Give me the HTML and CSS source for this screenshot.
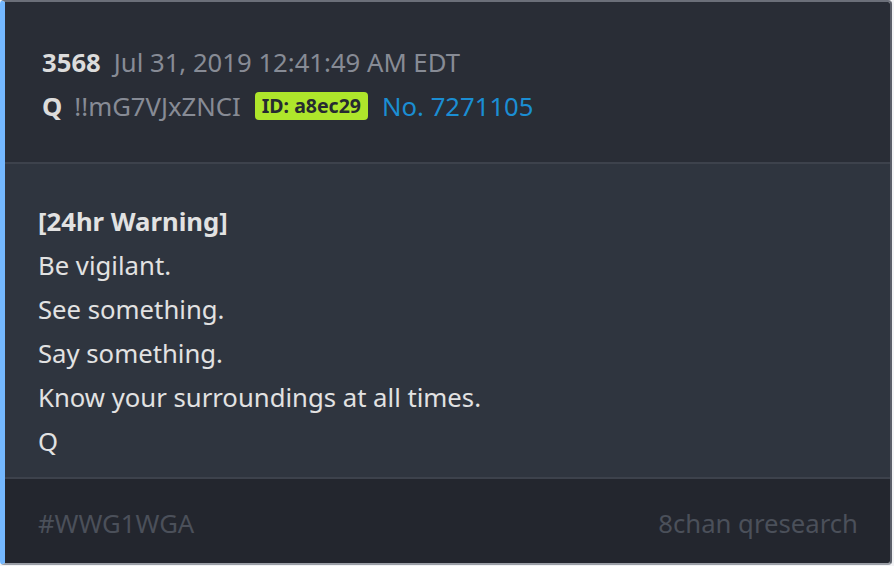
FILE: index.html
```html
<!DOCTYPE html>
<html>
<head>
<meta charset="utf-8">
<link rel="stylesheet" href="styles.css">
</head>
<body>
<div class="card">
  <div class="head">
    <div class="row"><span class="num">3568</span><span class="date">Jul 31, 2019 12:41:49 AM EDT</span></div>
    <div class="row"><span class="name">Q</span><span class="trip">!!mG7VJxZNCI</span><span class="badge">ID: a8ec29</span><span class="no">No. 7271105</span></div>
  </div>
  <div class="body">
    <div class="strong">[24hr Warning]</div>
    <div>Be vigilant.</div>
    <div>See something.</div>
    <div>Say something.</div>
    <div>Know your surroundings at all times.</div>
    <div>Q</div>
  </div>
  <div class="foot">
    <span>#WWG1WGA</span>
    <span>8chan qresearch</span>
  </div>
</div>
</body>
</html>
```
FILE: styles.css
```css
html, body {
  margin: 0;
  padding: 0;
  background: #f2f3f5;
}
body {
  font-family: "Noto Sans", "Open Sans", sans-serif;
  font-size: 25.7px;
}
.card {
  box-sizing: border-box;
  width: 892px;
  height: 565px;
  border-top: 2px solid #6b6f79;
  border-right: 2px solid #5b5f69;
  border-bottom: 2px solid #9a9ea6;
  border-left: 5px solid #74b8ff;
  border-radius: 4px;
  overflow: hidden;
  display: flex;
  flex-direction: column;
}
.head {
  background: #292d36;
  padding: 38px 20px 34px 37px;
  border-bottom: 2px solid #3d424c;
}
.row {
  display: flex;
  align-items: center;
  height: 44px;
  white-space: nowrap;
}
.num {
  font-weight: 700;
  color: #dcdcdc;
  margin-right: 13px;
}
.name {
  font-weight: 700;
  color: #dcdcdc;
  margin-right: 12px;
}
.date, .trip {
  color: #878b95;
}
.trip { margin-right: 14px; }
.badge {
  background: #aee62b;
  color: #262a31;
  font-weight: 700;
  font-size: 19.5px;
  border-radius: 4px;
  padding: 0 7px;
  height: 28px;
  line-height: 28px;
  margin-right: 14px;
}
.no { color: #1b8ed3; }
.body {
  background: #2f353f;
  color: #e2e2e2;
  padding: 36px 20px 13px 33px;
  line-height: 44px;
  border-bottom: 2px solid #3d424c;
}
.strong { font-weight: 700; }
.foot {
  flex: 1;
  background: #23262e;
  color: #4b505a;
  display: flex;
  justify-content: space-between;
  align-items: center;
  padding: 5px 32px 0 33px;
}
```
